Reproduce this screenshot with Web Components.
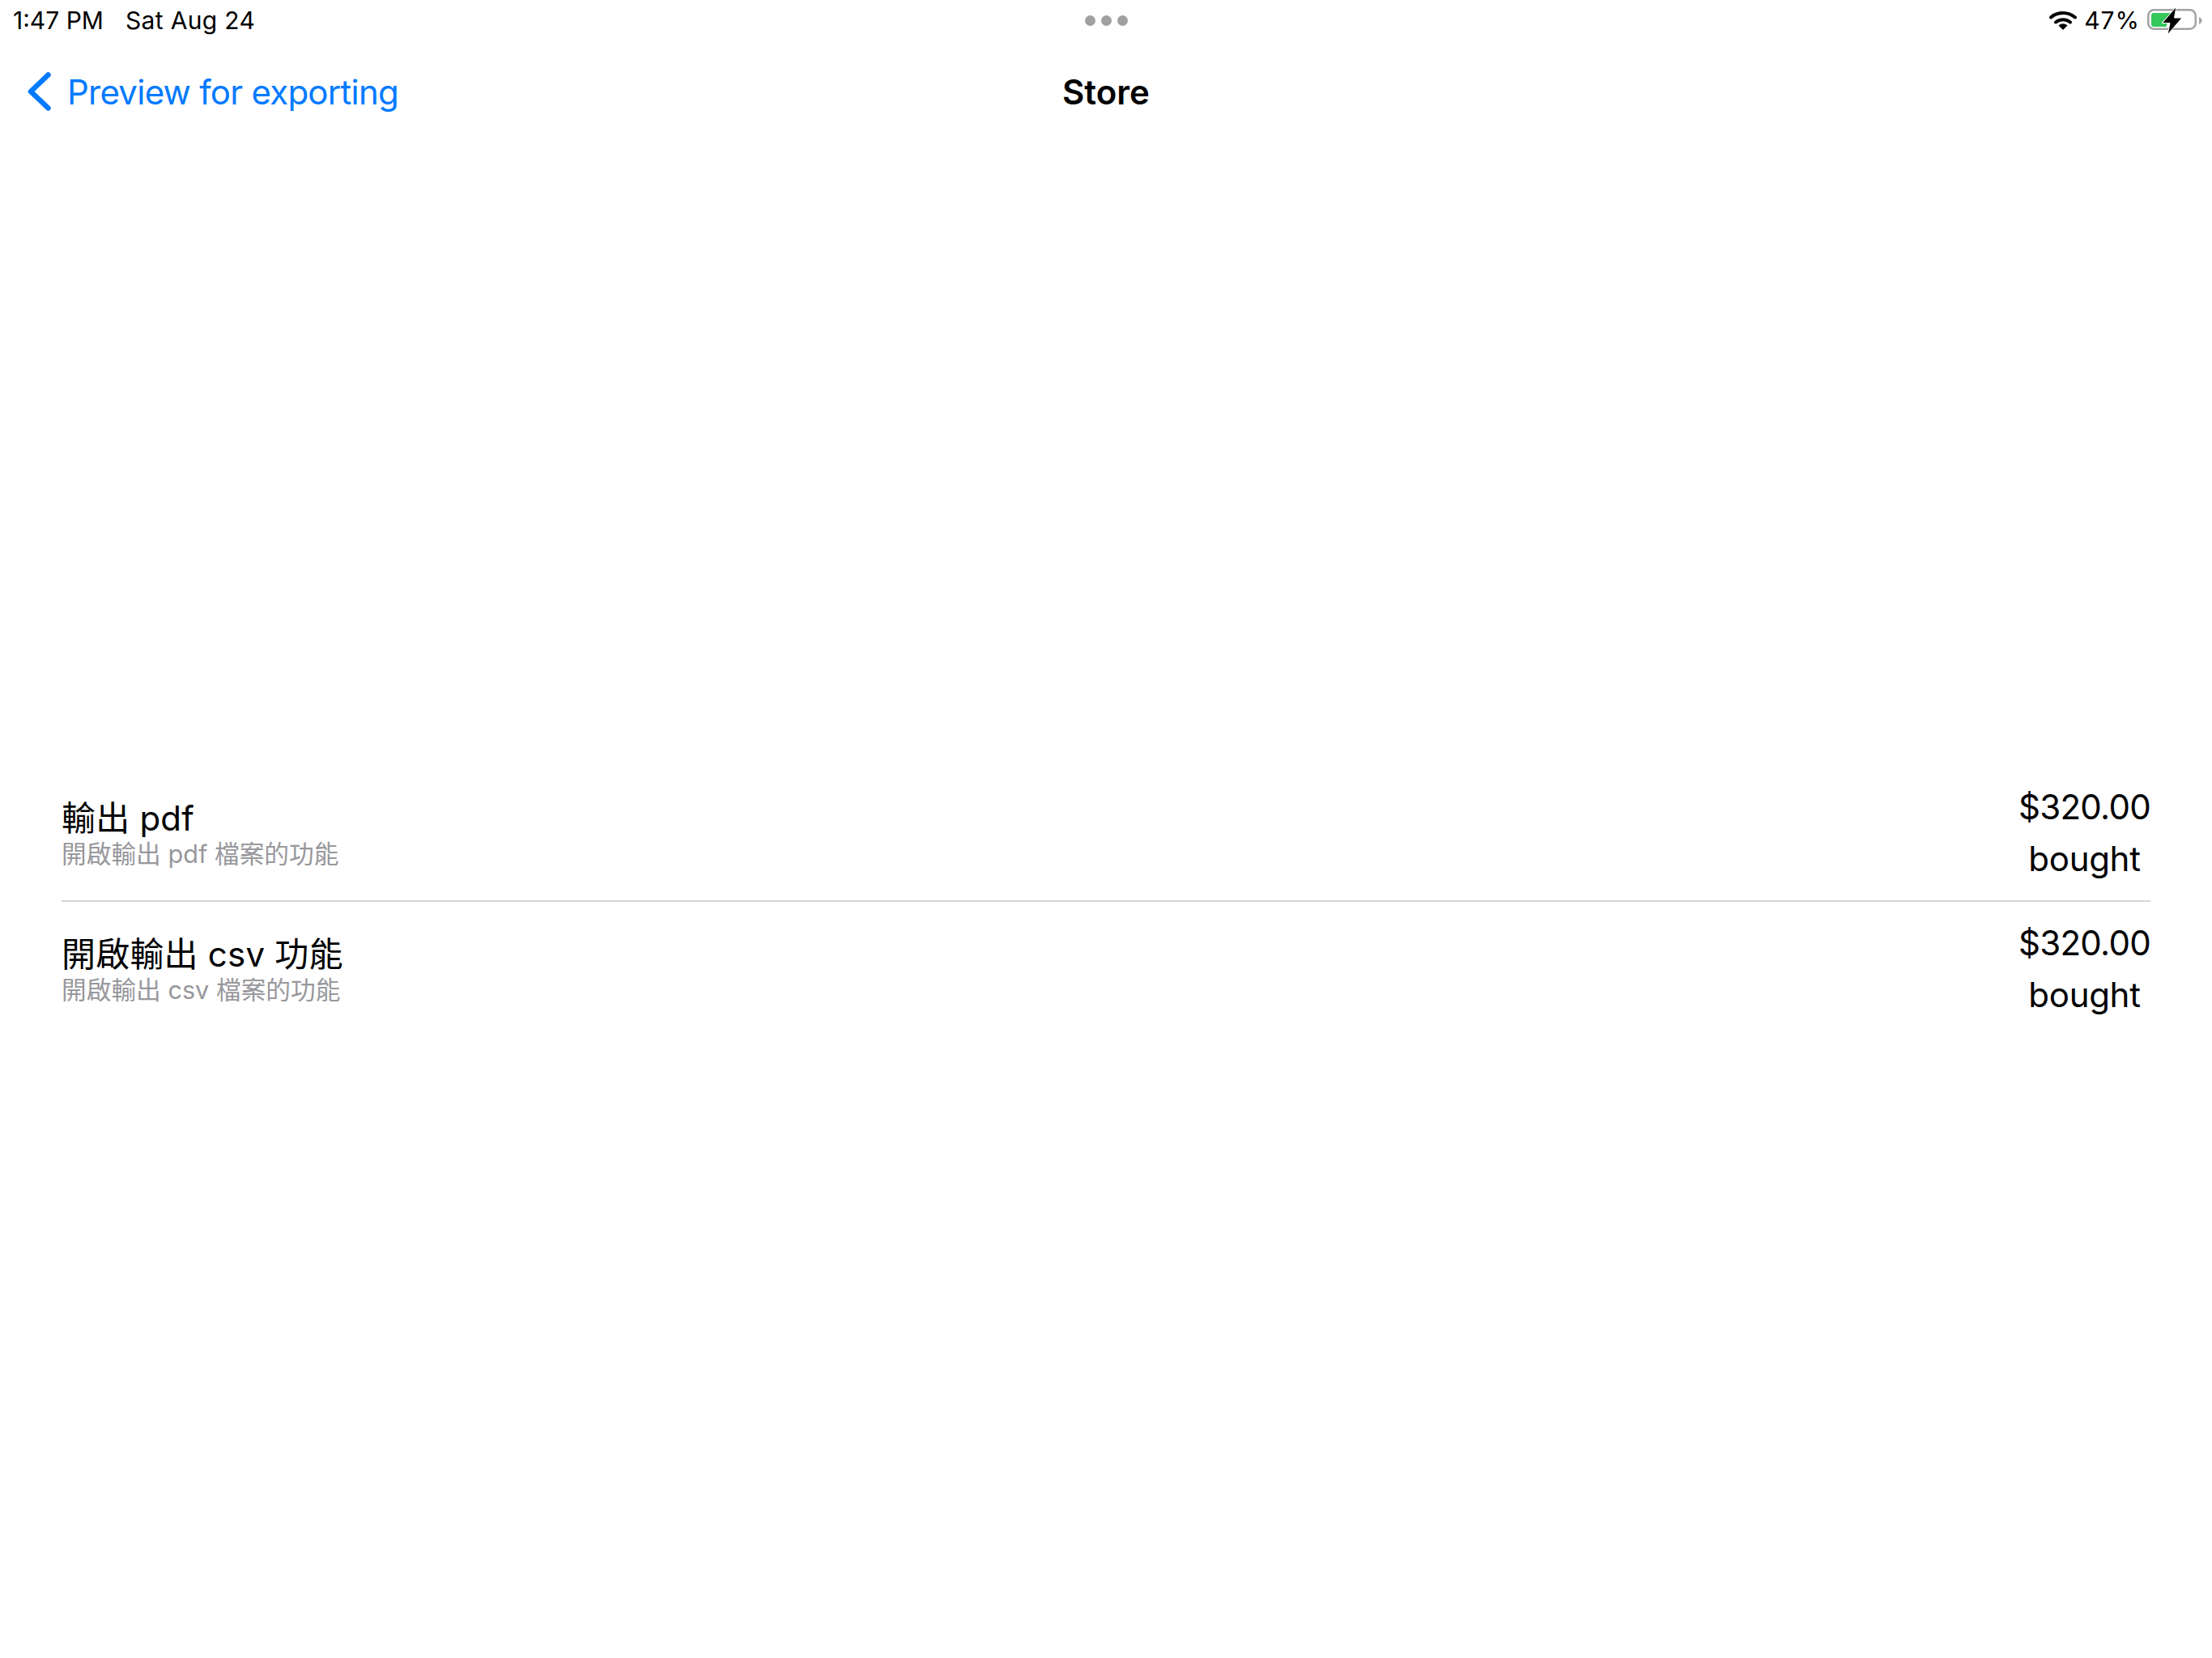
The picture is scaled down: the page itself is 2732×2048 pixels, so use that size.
<!DOCTYPE html>
<html lang="zh-Hant">
<head>
<meta charset="UTF-8">
<title>Store</title>
<style>
  html, body { margin: 0; height: 100%; background: #fff; }
  body {
    font-family: Inter, "Noto Sans CJK TC", sans-serif;
    color: #000;
    display: flex;
    flex-direction: column;
    height: 2048px;
    overflow: hidden;
  }
</style>
</head>
<body>
  <status-bar></status-bar>
  <nav-bar title="Store" back="Preview for exporting"></nav-bar>
  <store-list>
    <store-item name="輸出 pdf" desc="開啟輸出 pdf 檔案的功能" price="$320.00" state="bought"></store-item>
    <store-item name="開啟輸出 csv 功能" desc="開啟輸出 csv 檔案的功能" price="$320.00" state="bought" last></store-item>
  </store-list>

<script>
  class StatusBar extends HTMLElement {
    constructor() {
      super();
      this.attachShadow({ mode: 'open' }).innerHTML = `
        <style>
          :host { display: grid; grid-template-columns: 1fr auto 1fr; align-items: center; height: 50px; padding: 0 12px; font-size: 30px; flex: none; }
          .left { display: flex; gap: 27px; margin-left: 4px; }
          .date { letter-spacing: .35px; }
          .dots { display: flex; gap: 7px; }
          .dots i { width: 13px; height: 13px; border-radius: 50%; background: #a0a0a0; }
          .right { display: flex; justify-content: flex-end; align-items: center; gap: 9px; }
          .pct { letter-spacing: 1px; }
          svg { display: block; }
        </style>
        <div class="left"><span>1:47 PM</span><span class="date">Sat Aug 24</span></div>
        <div class="dots"><i></i><i></i><i></i></div>
        <div class="right">
          <svg width="34" height="24" viewBox="0 0 34 24">
            <path d="M2 8.5C10.5 1 23.5 1 32 8.5" fill="none" stroke="#000" stroke-width="4" stroke-linecap="round"/>
            <path d="M8 14.5C13 10 21 10 26 14.5" fill="none" stroke="#000" stroke-width="4" stroke-linecap="round"/>
            <path d="M11.5 18.5C15 15.5 19 15.5 22.5 18.5L17 24Z" fill="#000"/>
          </svg>
          <span class="pct">47%</span>
          <svg width="68" height="40" viewBox="0 0 68 40">
            <rect x="1.25" y="7.25" width="58.5" height="23.5" rx="7" fill="none" stroke="#a3a3a3" stroke-width="2.5"/>
            <path d="M64 16C66.5 17 67.5 19 67.5 20.5S66.5 24 64 25Z" fill="#a3a3a3"/>
            <path d="M8 11H29L18 23H25L23.5 28H8A3 3 0 0 1 5 25V14A3 3 0 0 1 8 11Z" fill="#34c759"/>
            <path d="M36 3L18.5 23.5H28L25 38L43 17H33.5Z" fill="#000" stroke="#fff" stroke-width="1"/>
          </svg>
        </div>`;
    }
  }

  class NavBar extends HTMLElement {
    constructor() {
      super();
      this.attachShadow({ mode: 'open' }).innerHTML = `
        <style>
          :host { display: grid; grid-template-columns: 1fr auto 1fr; align-items: center; height: 126px; padding: 0 33px; flex: none; }
          .back { display: flex; align-items: center; gap: 18px; color: #007aff; font-size: 42px; letter-spacing: -.75px; }
          svg { display: block; }
          .title { font-size: 42px; font-weight: 600; }
        </style>
        <div class="back">
          <svg width="32" height="50" viewBox="0 0 32 50">
            <path d="M26.5 4.5L5 25L26.5 45.5" fill="none" stroke="#007aff" stroke-width="6.5" stroke-linecap="round" stroke-linejoin="round"/>
          </svg>
          <span>${this.getAttribute('back')}</span>
        </div>
        <div class="title">${this.getAttribute('title')}</div>
        <div></div>`;
    }
  }

  class StoreList extends HTMLElement {
    constructor() {
      super();
      this.attachShadow({ mode: 'open' }).innerHTML = `
        <style>
          :host { display: block; padding: 770px 76px 0; }
        </style>
        <slot></slot>`;
    }
  }

  class StoreItem extends HTMLElement {
    constructor() {
      super();
      this.attachShadow({ mode: 'open' }).innerHTML = `
        <style>
          :host { display: flex; justify-content: space-between; align-items: center; height: 166px; border-bottom: 2px solid #d4d4d6; }
          :host([last]) { border-bottom-color: transparent; }
          .name { font-size: 42px; line-height: 50px; letter-spacing: .2px; }
          .desc { font-size: 30.7px; line-height: 37px; color: #98989d; }
          .side { display: flex; flex-direction: column; align-items: center; font-size: 42px; line-height: 64px; }
          .price { letter-spacing: -.7px; }
          .state { letter-spacing: -.3px; }
        </style>
        <div>
          <div class="name">${this.getAttribute('name')}</div>
          <div class="desc">${this.getAttribute('desc')}</div>
        </div>
        <div class="side">
          <span class="price">${this.getAttribute('price')}</span>
          <span class="state">${this.getAttribute('state')}</span>
        </div>`;
    }
  }

  customElements.define('status-bar', StatusBar);
  customElements.define('nav-bar', NavBar);
  customElements.define('store-list', StoreList);
  customElements.define('store-item', StoreItem);
</script>
</body>
</html>
